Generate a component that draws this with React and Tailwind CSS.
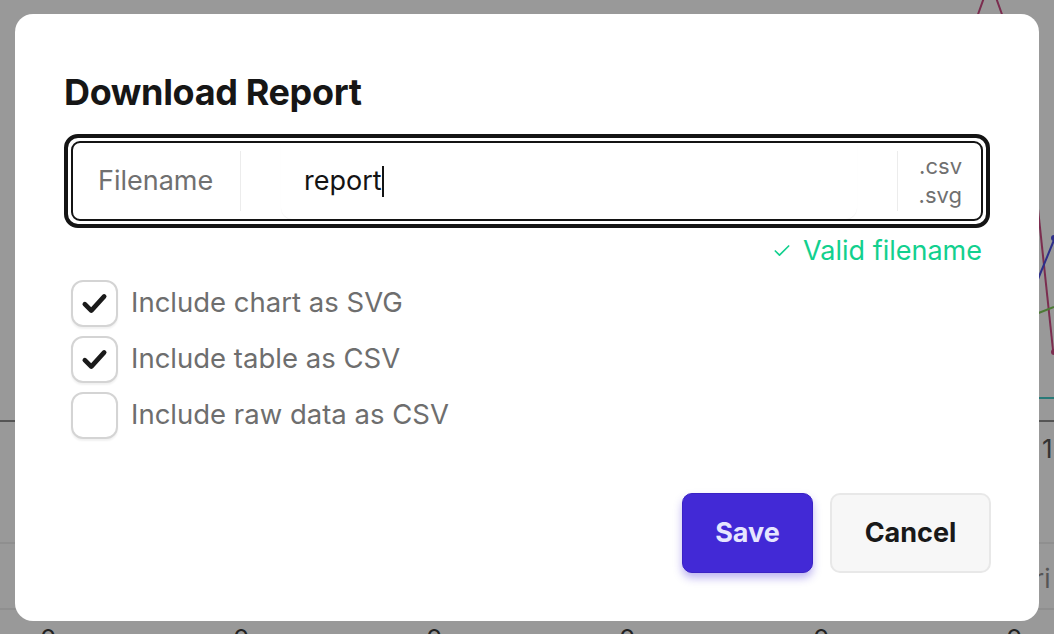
import { Check } from 'lucide-react';

const font = { fontFamily: 'Inter, "Noto Sans", sans-serif' };

function Backdrop() {
  // chart behind the overlay, already tinted by the dim layer
  return (
    <svg className="absolute inset-0" width="1054" height="634" viewBox="0 0 1054 634">
      <path d="M976 20 L986 -8 Q990 -14 994 -8 L1004 20" stroke="#7b2d4f" strokeWidth="2" fill="none" />
      <path d="M1036 190 L1053 350" stroke="#7b2d4f" strokeWidth="2" fill="none" />
      <circle cx="1054" cy="352" r="3" fill="#7b2d4f" />
      <path d="M1036 284 L1054 240" stroke="#2e2f8a" strokeWidth="2" fill="none" />
      <circle cx="1054" cy="238" r="3" fill="#2e2f8a" />
      <path d="M1036 314 L1054 307" stroke="#4c7a35" strokeWidth="2" fill="none" />
      <path d="M1036 398 L1054 398" stroke="#287a78" strokeWidth="2" />
      <path d="M0 421 L20 421 M1034 421 L1054 421" stroke="#3f3f3f" strokeWidth="1.5" />
      <path d="M0 543 L20 543 M1034 543 L1054 543 M0 609 L20 609 M1034 609 L1054 609" stroke="#858585" strokeWidth="1" />
      <text x="1042" y="458" fontSize="26" fill="#333" fontFamily="Inter, sans-serif">1</text>
      <text x="1034" y="588" fontSize="26" fill="#555" fontFamily="Inter, sans-serif">ri</text>
      {[47, 240, 433, 626, 820, 1013].map((x) => (
        <text key={x} x={x - 7} y="648" fontSize="26" fill="#222" fontFamily="Inter, sans-serif">
          0
        </text>
      ))}
    </svg>
  );
}

function CheckRow({ checked, label }) {
  return (
    <label className="flex items-center gap-[13px] h-[56px]">
      <span className="w-[47px] h-[47px] rounded-[12px] border-2 border-[#d4d4d4] bg-white shadow-[0_2px_2px_rgba(0,0,0,0.06)] flex items-center justify-center">
        {checked && (
          <svg width="31" height="31" viewBox="0 0 24 24">
            <path d="M4.5 12.5 L9.5 17.5 L19.5 6.5" stroke="#1a1a1a" strokeWidth="3.6" strokeLinecap="round" strokeLinejoin="round" fill="none" />
          </svg>
        )}
      </span>
      <span className="text-[27.5px] text-[#6e6e6e] leading-none">{label}</span>
    </label>
  );
}

export default function App() {
  return (
    <div className="relative w-[1054px] h-[634px] overflow-hidden bg-[#999999]" style={font}>
      <Backdrop />
      <div className="relative pt-[14px] pl-[15px]">
        <div className="w-[1024px] h-[607px] bg-white rounded-[18px] pl-[49px] pr-[48px] pt-[58px] flex flex-col">
          <h1 className="m-0 text-[36px] font-bold text-[#161616] leading-[40px] tracking-[-0.01em]">Download Report</h1>

          <div className="mt-[22px] mr-px border-4 border-[#141414] rounded-[14px] p-[3px]">
            <div className="flex items-center h-[80px] border-2 border-[#141414] rounded-[9px]">
              <div className="w-[167px] pl-[25px] text-[27px] text-[#707070]">Filename</div>
              <div className="w-px h-[60px] bg-[#ececec]" />
              <div className="flex-1 h-full px-[40px] flex">
                <div className="flex-1 h-full rounded-b-[12px] shadow-[0_1px_1px_rgba(0,0,0,0.05)] flex items-center pl-[23px]">
                  <span className="text-[27px] text-[#141414]">report</span>
                  <span className="w-[2px] h-[31px] bg-[#141414]" />
                </div>
              </div>
              <div className="w-px h-[60px] bg-[#ececec]" />
              <div className="w-[83px] pr-[19px] flex flex-col items-end text-[22px] leading-[29px] text-[#707070]">
                <span>.csv</span>
                <span>.svg</span>
              </div>
            </div>
          </div>

          <div className="mt-[7px] flex items-center justify-end gap-[11px] pr-[9px] text-[#12d08e]">
            <Check size={20} strokeWidth={2} />
            <span className="text-[27px] leading-[32px]">Valid filename</span>
          </div>

          <div className="mt-[8px] pl-[7px] flex flex-col">
            <CheckRow checked label="Include chart as SVG" />
            <CheckRow checked label="Include table as CSV" />
            <CheckRow checked={false} label="Include raw data as CSV" />
          </div>

          <div className="mt-auto mb-[48px] flex justify-end gap-[17px]">
            <button className="w-[131px] h-[80px] rounded-[10px] bg-[#4229d6] border border-[#3a22c4] text-[#e6e6ff] text-[27px] font-bold shadow-[0_5px_8px_rgba(66,41,214,0.35)]">
              Save
            </button>
            <button className="w-[161px] h-[80px] rounded-[10px] bg-[#f7f7f7] border-2 border-[#e8e8e8] text-[#191919] text-[27px] font-bold">
              Cancel
            </button>
          </div>
        </div>
      </div>
    </div>
  );
}
